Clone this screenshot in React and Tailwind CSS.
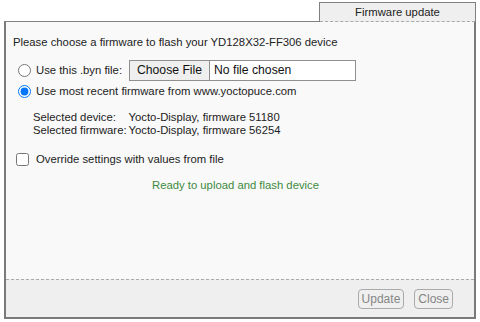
import { useState } from "react";

const App = () => {
  const [mode, setMode] = useState("web");
  const [override, setOverride] = useState(false);

  return (
    <div className="w-[480px] h-[322px] bg-white font-['Liberation_Sans',Arial,sans-serif] text-[11.3px] text-[#222] pt-[2px] pl-[4px]">
      {/* Tab header */}
      <div className="flex w-[472px]">
        <div className="flex-1 border-b border-[#808080]" />
        <div className="w-[157px] flex flex-col bg-[#efefef] border-t border-l border-r border-[#808080]">
          <div className="h-[18px] flex items-center justify-center text-[#222]">Firmware update</div>
          <div className="border-t border-dashed border-[#aaa]" />
        </div>
      </div>

      {/* Panel */}
      <div className="w-[472px] h-[297px] border-l-2 border-r-2 border-b-2 border-[#7a7a7a] bg-[#f9f9f9] flex flex-col">
        <div className="flex-1 pl-[7px] pt-[13px]">
          <p className="leading-[14px]">Please choose a firmware to flash your YD128X32-FF306 device</p>

          <div className="mt-[11px] flex items-center h-[21px]">
            <input
              type="radio"
              name="fw"
              checked={mode === "file"}
              onChange={() => setMode("file")}
              className="ml-[5px] mr-[5px] w-[13px] h-[13px] accent-[#0075ff]"
            />
            <span className="w-[93px]">Use this .byn file:</span>
            <div className="flex items-stretch h-[21px] border border-[#8f8f8f] bg-white w-[227px]">
              <button className="px-[7px] bg-[#efefef] border-r border-[#8f8f8f] text-[12.2px] text-[#111]">Choose File</button>
              <span className="px-[4px] text-[12.2px] leading-[19px] text-[#111]">No file chosen</span>
            </div>
          </div>

          <label className="mt-[1px] flex items-center h-[18px]">
            <input
              type="radio"
              name="fw"
              checked={mode === "web"}
              onChange={() => setMode("web")}
              className="ml-[5px] mr-[5px] w-[13px] h-[13px] accent-[#0075ff]"
            />
            <span>Use most recent firmware from www.yoctopuce.com</span>
          </label>

          <div className="mt-[11px] pl-[20px] leading-[13px] grid grid-cols-[auto_1fr] gap-x-[2px] whitespace-nowrap">
            <span>Selected device:</span>
            <span>Yocto-Display, firmware 51180</span>
            <span>Selected firmware:</span>
            <span>Yocto-Display, firmware 56254</span>
          </div>

          <label className="mt-[13px] flex items-center h-[18px]">
            <input
              type="checkbox"
              checked={override}
              onChange={() => setOverride(!override)}
              className="ml-[3px] mr-[7px] w-[13px] h-[13px]"
            />
            <span>Override settings with values from file</span>
          </label>

          <p className="mt-[9px] text-center text-[#3d8a3d] pr-[16px]">Ready to upload and flash device</p>
        </div>

        {/* Footer */}
        <div className="h-[38px] border-t border-dashed border-[#aaa] bg-[#efefef] flex items-center justify-end gap-[10px] pr-[21px]">
          <button className="h-[20px] px-[3px] border border-[#aaa] rounded-[4px] text-[12px] text-[#858585]">Update</button>
          <button className="h-[20px] px-[3px] border border-[#aaa] rounded-[4px] text-[12px] text-[#858585]">Close</button>
        </div>
      </div>
    </div>
  );
};

export default App;
